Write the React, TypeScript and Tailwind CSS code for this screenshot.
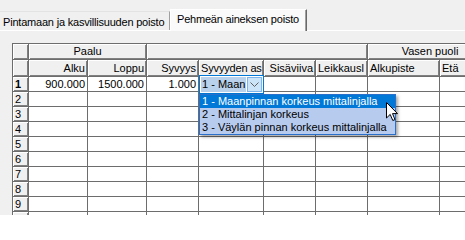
import React from 'react'

type Col = { w: string; label: string; align: 'left' | 'right' }

const columns: Col[] = [
  { w: 'w-[16px]', label: '', align: 'left' },
  { w: 'w-[59px]', label: 'Alku', align: 'right' },
  { w: 'w-[59px]', label: 'Loppu', align: 'right' },
  { w: 'w-[52px]', label: 'Syvyys', align: 'right' },
  { w: 'w-[65px]', label: 'Syvyyden as', align: 'left' },
  { w: 'w-[52px]', label: 'Sisäviiva', align: 'right' },
  { w: 'w-[52px]', label: 'Leikkausl', align: 'left' },
  { w: 'w-[72px]', label: 'Alkupiste', align: 'left' },
  { w: 'w-[53px]', label: 'Etä', align: 'left' },
  { w: 'w-[80px]', label: '', align: 'left' },
]

const rows: string[][] = [
  ['900.000', '1500.000', '1.000'],
  [], [], [], [], [], [], [], [], [],
]

const options = [
  '1 - Maanpinnan korkeus mittalinjalla',
  '2 - Mittalinjan korkeus',
  '3 - Väylän pinnan korkeus mittalinjalla',
]

const fixedCell =
  'h-full shrink-0 bg-[#f0f0f0] border-r border-b border-[#6d6d6d] shadow-[inset_1px_1px_0_#ffffff,inset_-1px_-1px_0_#808080] overflow-hidden whitespace-nowrap flex items-center px-[2px]'

const dataCell =
  'h-full shrink-0 bg-white border-r border-b border-[#6d6d6d] overflow-hidden whitespace-nowrap flex items-center justify-end px-[2px]'

function Tabs() {
  return (
    <div className="flex items-end h-[31px] border-b border-white tracking-[-0.2px] whitespace-nowrap">
      <div className="h-[19px] w-[170px] shrink-0 border-t border-r border-t-[#e3e3e3] border-r-[#a0a0a0] flex items-center pl-[3px] pt-[2px]">
        Pintamaan ja kasvillisuuden poisto
      </div>
      <div className="h-[22px] w-[137px] shrink-0 -mb-px bg-[#fafafa] border-t border-l border-r border-t-white border-l-white border-r-[#696969] shadow-[inset_-1px_0_0_#a0a0a0] flex items-start pl-[6px] pt-[4px]">
        Pehmeän aineksen poisto
      </div>
    </div>
  )
}

function Grid() {
  return (
    <div className="border-l border-t border-[#6d6d6d] w-[600px]">
      {/* header row 1 */}
      <div className="flex h-[16px]">
        <div className={`${fixedCell} w-[16px]`} />
        <div className={`${fixedCell} w-[118px] justify-center`}>Paalu</div>
        <div className={`${fixedCell} w-[221px]`} />
        <div className={`${fixedCell} w-[125px] justify-center`}>Vasen puoli</div>
        <div className={`${fixedCell} w-[120px]`} />
      </div>
      {/* header row 2 */}
      <div className="flex h-[17px]">
        {columns.map((c, i) => (
          <div
            key={i}
            className={`${fixedCell} ${c.w} ${c.align === 'right' ? 'justify-end' : 'justify-start'} ${i === 4 ? 'tracking-[-0.15px]' : ''}`}
          >
            {c.label}
          </div>
        ))}
      </div>
      {rows.map((r, ri) => (
        <div key={ri} className="flex h-[15px]">
          <div className={`${fixedCell} w-[16px] ${ri === 0 ? 'font-bold' : ''}`}>{ri + 1}</div>
          {columns.slice(1).map((c, ci) => (
            <div key={ci} className={`${dataCell} ${c.w}`}>
              {r[ci] ?? ''}
            </div>
          ))}
        </div>
      ))}
    </div>
  )
}

function Combo() {
  return (
    <div className="absolute left-[199px] top-[75px] w-[65px] h-[19px] bg-white border border-[#0078d7] flex items-center px-px gap-px">
      <div className="h-[15px] w-[46px] bg-[#b9d1ea] flex items-center pl-px whitespace-nowrap overflow-hidden">
        1 - Maan
      </div>
      <div className="h-[15px] w-[15px] ml-auto bg-[#cce4f7] border border-[#7eb4ea] flex items-center justify-center">
        <svg width="9" height="6" viewBox="0 0 9 6">
          <path d="M0.5 0.5 L4.5 4.5 L8.5 0.5" fill="none" stroke="#606060" strokeWidth="1" />
        </svg>
      </div>
    </div>
  )
}

function DropList() {
  return (
    <div className="absolute left-[199px] top-[94px] w-[197px] border border-[#2a6fc9] bg-[#b7cbee] shadow-[2px_2px_3px_rgba(0,0,0,0.35)]">
      {options.map((o, i) => (
        <div
          key={o}
          className={`h-[13px] leading-[13px] pl-[2px] whitespace-nowrap ${i === 0 ? 'bg-[#0078d7] text-white' : 'text-black'}`}
        >
          {o}
        </div>
      ))}
    </div>
  )
}

function Cursor() {
  return (
    <svg className="absolute left-[386px] top-[102px]" width="13" height="20" viewBox="0 0 13 20">
      <path
        d="M0.5 0.5 L0.5 16 L4.2 12.4 L6.8 18.5 L9 17.6 L6.5 11.6 L11.5 11.6 Z"
        fill="#ffffff"
        stroke="#000000"
        strokeWidth="1"
        strokeLinejoin="miter"
      />
    </svg>
  )
}

export default function App() {
  return (
    <div className="relative w-[465px] h-[215px] overflow-hidden bg-[#f0f0f0] text-black text-[11px] leading-none font-['Liberation_Sans',Arial,sans-serif]">
      <Tabs />
      <div className="pl-[12px] pt-[12px]">
        <Grid />
      </div>
      <Combo />
      <DropList />
      <Cursor />
    </div>
  )
}
